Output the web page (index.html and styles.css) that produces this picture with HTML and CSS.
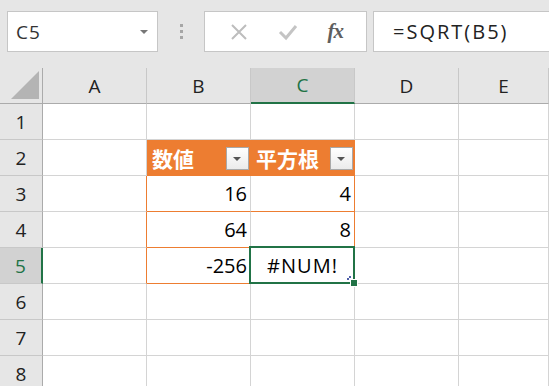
FILE: index.html
```html
<!DOCTYPE html>
<html lang="ja">
<head>
    <meta charset="UTF-8">
    <meta name="viewport" content="width=device-width, initial-scale=1.0">
    <title>SQRT</title>
    <link rel="stylesheet" href="styles.css">
</head>
<body>
    <div class="toolbar">
        <div class="namebox">
            <span>C5</span>
            <span class="caret"></span>
        </div>
        <div class="grip"><i></i><i></i><i></i></div>
        <div class="fx-buttons">
            <svg class="icon" width="18" height="18" viewBox="0 0 18 18">
                <path d="M2 2 L16 16 M16 2 L2 16" stroke="#bdbdbd" stroke-width="2" fill="none"/>
            </svg>
            <svg class="icon" width="20" height="18" viewBox="0 0 20 18">
                <path d="M2 9 L8 15 L18 3" stroke="#c4c4c4" stroke-width="3" fill="none"/>
            </svg>
            <span class="fx">fx</span>
        </div>
        <div class="formula">=SQRT(B5)</div>
    </div>

    <div class="sheet">
        <!-- column headers -->
        <div class="corner"><span class="tri"></span></div>
        <div class="colhead">A</div>
        <div class="colhead">B</div>
        <div class="colhead active">C</div>
        <div class="colhead">D</div>
        <div class="colhead">E</div>

        <!-- row 1 -->
        <div class="rowhead">1</div>
        <div class="cell"></div>
        <div class="cell"></div>
        <div class="cell"></div>
        <div class="cell"></div>
        <div class="cell"></div>

        <!-- row 2: table header -->
        <div class="rowhead">2</div>
        <div class="cell"></div>
        <div class="cell th">数値<span class="filter"></span></div>
        <div class="cell th last">平方根<span class="filter"></span></div>
        <div class="cell"></div>
        <div class="cell"></div>

        <!-- row 3 -->
        <div class="rowhead">3</div>
        <div class="cell edge"></div>
        <div class="cell td num">16</div>
        <div class="cell td last num">4</div>
        <div class="cell"></div>
        <div class="cell"></div>

        <!-- row 4 -->
        <div class="rowhead">4</div>
        <div class="cell edge"></div>
        <div class="cell td num">64</div>
        <div class="cell td last num">8</div>
        <div class="cell"></div>
        <div class="cell"></div>

        <!-- row 5 -->
        <div class="rowhead active">5</div>
        <div class="cell edge"></div>
        <div class="cell td num">-256</div>
        <div class="cell td last err">#NUM!</div>
        <div class="cell"></div>
        <div class="cell"></div>

        <!-- row 6 -->
        <div class="rowhead">6</div>
        <div class="cell"></div>
        <div class="cell"></div>
        <div class="cell"></div>
        <div class="cell"></div>
        <div class="cell"></div>

        <!-- row 7 -->
        <div class="rowhead">7</div>
        <div class="cell"></div>
        <div class="cell"></div>
        <div class="cell"></div>
        <div class="cell"></div>
        <div class="cell"></div>

        <!-- row 8 -->
        <div class="rowhead">8</div>
        <div class="cell"></div>
        <div class="cell"></div>
        <div class="cell"></div>
        <div class="cell"></div>
        <div class="cell"></div>

        <!-- active cell C5 -->
        <div class="selection"></div>
        <div class="handle-dots"></div>
        <div class="handle"></div>
    </div>
</body>
</html>
```

FILE: styles.css
```css
body {
    margin: 0;
    padding: 0;
    background-color: #e6e6e6;
    font-family: "Open Sans", "Noto Sans CJK JP", sans-serif;
    color: #000;
    overflow: hidden;
}

.toolbar {
    display: flex;
    height: 68px;
    box-sizing: border-box;
    padding: 11px 0 16px 7px;
}

.namebox {
    width: 151px;
    box-sizing: border-box;
    background: #fff;
    border: 1px solid #c6c6c6;
    display: flex;
    align-items: center;
    justify-content: space-between;
    padding: 0 9px 0 8px;
    font-size: 19px;
    color: #333;
    letter-spacing: 1px;
}

.caret {
    width: 0;
    height: 0;
    border-left: 4px solid transparent;
    border-right: 4px solid transparent;
    border-top: 4px solid #777;
}

.grip {
    width: 46px;
    display: flex;
    flex-direction: column;
    align-items: center;
    justify-content: center;
    gap: 3px;
}

.grip i {
    width: 3px;
    height: 3px;
    background: #a6a6a6;
}

.fx-buttons {
    width: 163px;
    box-sizing: border-box;
    background: #fff;
    border: 1px solid #c6c6c6;
    display: flex;
    align-items: center;
    justify-content: space-around;
    padding: 0 8px 0 10px;
}

.fx {
    font-family: "Liberation Serif", "DejaVu Serif", serif;
    font-style: italic;
    font-weight: bold;
    font-size: 21px;
    color: #5f5f5f;
    letter-spacing: -1px;
}

.formula {
    flex: 1;
    margin-left: 6px;
    background: #fff;
    border: 1px solid #c6c6c6;
    border-right: none;
    display: flex;
    align-items: center;
    padding-left: 19px;
    font-size: 20px;
    color: #222;
    letter-spacing: 2px;
}

.sheet {
    position: relative;
    display: grid;
    grid-template-columns: 43px repeat(4, 104px) 1fr;
    grid-template-rows: 36px repeat(8, 36px);
    background: #fff;
}

.corner,
.colhead,
.rowhead {
    background: #e6e6e6;
    box-sizing: border-box;
    display: flex;
    align-items: center;
    justify-content: center;
    font-size: 19px;
    color: #222;
}

.corner {
    border-right: 1px solid #ababab;
    border-bottom: 1px solid #ababab;
    position: relative;
}

.corner .tri {
    position: absolute;
    right: 3px;
    bottom: 4px;
    width: 0;
    height: 0;
    border-left: 28px solid transparent;
    border-bottom: 28px solid #b4b4b4;
}

.colhead {
    border-right: 1px solid #c8c8c8;
    border-bottom: 1px solid #ababab;
}

.colhead.active {
    background: #d2d2d2;
    color: #217346;
    border-bottom: 2px solid #217346;
}

.rowhead {
    border-right: 1px solid #ababab;
    border-bottom: 1px solid #c8c8c8;
}

.rowhead.active {
    background: #d2d2d2;
    color: #217346;
    border-right: 2px solid #217346;
}

.cell {
    box-sizing: border-box;
    border-right: 1px solid #d4d4d4;
    border-bottom: 1px solid #d4d4d4;
    display: flex;
    align-items: center;
    font-size: 20px;
}

.cell.edge {
    border-right-color: #ed7d31;
}

.cell.th {
    background: #ed7d31;
    color: #fff;
    font-family: "Noto Sans CJK JP", sans-serif;
    font-weight: bold;
    font-size: 21px;
    border-right-color: #ed7d31;
    border-bottom-color: #ed7d31;
    padding-left: 5px;
    justify-content: space-between;
    padding-right: 1px;
}

.cell.td {
    border-bottom-color: #ed7d31;
}

.cell.last {
    border-right-color: #ed7d31;
}

.num {
    justify-content: flex-end;
    padding-right: 3px;
}

.err {
    justify-content: center;
    letter-spacing: 1px;
}

.filter {
    position: relative;
    width: 23px;
    height: 23px;
    box-sizing: border-box;
    border: 1px solid #a9a9a9;
    background: linear-gradient(#ffffff, #ebebeb);
    margin-top: 2px;
}

.filter::after {
    content: "";
    position: absolute;
    left: 6px;
    top: 9px;
    border-left: 4px solid transparent;
    border-right: 4px solid transparent;
    border-top: 4px solid #555;
}

.selection {
    position: absolute;
    left: 249px;
    top: 178px;
    width: 106px;
    height: 38px;
    box-sizing: border-box;
    border: 2px solid #217346;
}

.handle {
    position: absolute;
    left: 351px;
    top: 212px;
    width: 6px;
    height: 6px;
    background: #217346;
    outline: 1px solid #fff;
}

.handle-dots {
    position: absolute;
    left: 347px;
    top: 210px;
    width: 2px;
    height: 2px;
    background: #4e5fa8;
    box-shadow: 2px -2px 0 #4e5fa8;
}
```
